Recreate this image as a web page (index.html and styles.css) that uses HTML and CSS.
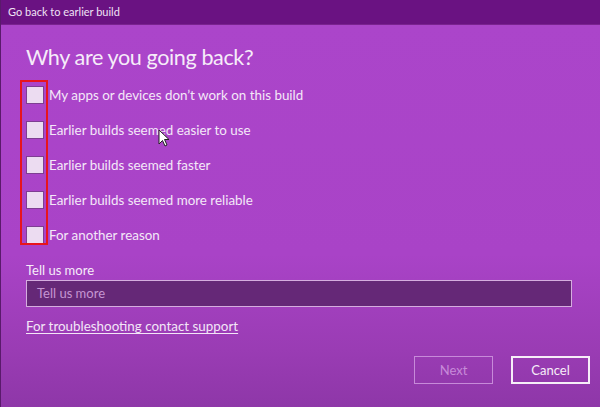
FILE: index.html
```html
<!DOCTYPE html>
<html lang="en">
<head>
<meta charset="utf-8">
<title>Go back to earlier build</title>
<link rel="stylesheet" href="styles.css">
</head>
<body>
<div class="window">
  <div class="titlebar">Go back to earlier build</div>
  <div class="content">
    <h1 class="heading">Why are you going back?</h1>
    <div class="options">
      <div class="highlight"></div>
      <label class="option"><span class="box"></span><span class="label">My apps or devices don’t work on this build</span></label>
      <label class="option"><span class="box"></span><span class="label">Earlier builds seemed easier to use</span></label>
      <label class="option"><span class="box"></span><span class="label">Earlier builds seemed faster</span></label>
      <label class="option"><span class="box"></span><span class="label">Earlier builds seemed more reliable</span></label>
      <label class="option"><span class="box"></span><span class="label">For another reason</span></label>
      <svg class="cursor" width="12" height="18" viewBox="0 0 12 18"><path d="M1 1 L1 15 L4.5 11.5 L7 17 L9 16 L6.5 10.5 L11 10.5 Z" fill="#fff" stroke="#222" stroke-width="1"/></svg>
    </div>
    <div class="field-label">Tell us more</div>
    <div class="input">Tell us more</div>
    <a class="link" href="#">For troubleshooting contact support</a>
    <div class="buttons">
      <div class="btn btn-disabled">Next</div>
      <div class="btn btn-primary">Cancel</div>
    </div>
  </div>
</div>
</body>
</html>
```
FILE: styles.css
```css
html, body {
  margin: 0;
  padding: 0;
}
body {
  width: 600px;
  height: 407px;
  overflow: hidden;
  font-family: "Lato", "Noto Sans", sans-serif;
  background: #9a3cb5;
}
.window {
  width: 600px;
  height: 407px;
  display: flex;
  flex-direction: column;
  border-left: 1px solid #5a1a6c;
  box-sizing: border-box;
}
.titlebar {
  height: 25px;
  flex: none;
  background: #6a1282;
  color: #f0e2f5;
  font-size: 11px;
  line-height: 24px;
  padding-left: 7px;
  border-bottom: 1px solid #7a2290;
  box-sizing: border-box;
}
.content {
  flex: 1;
  padding: 17px 10px 0 25px;
  background: linear-gradient(to bottom, #ab45ca 0%, #a943c7 60%, #9a3cb4 85%, #8e37a8 100%);
  display: flex;
  flex-direction: column;
  color: #f3e6f7;
}
.heading {
  margin: 0;
  font-weight: 400;
  font-size: 21.6px;
  letter-spacing: -0.4px;
  line-height: 30px;
  color: #f6ecf9;
}
.options {
  position: relative;
  margin-top: 5px;
  display: flex;
  flex-direction: column;
}
.option {
  height: 35px;
  display: flex;
  align-items: center;
  gap: 5px;
}
.box {
  width: 16px;
  height: 16px;
  background: #ecdcf1;
  border: 1px solid #7e3e92;
  flex: none;
}
.label {
  font-size: 13.4px;
  color: #f4e8f8;
}
.highlight {
  position: absolute;
  left: -6px;
  top: 3px;
  width: 24px;
  height: 161px;
  border: 2px solid #e8141c;
}
.cursor {
  position: absolute;
  left: 132px;
  top: 52px;
}
.field-label {
  margin-top: 10px;
  font-size: 13px;
  line-height: 17px;
  color: #f6ecf9;
}
.input {
  margin-top: 1px;
  margin-right: 18px;
  height: 27px;
  box-sizing: border-box;
  background: #652877;
  border: 1px solid #d5addf;
  color: #c596d2;
  font-size: 13px;
  line-height: 25px;
  padding-left: 10px;
}
.link {
  align-self: flex-start;
  margin-top: 11px;
  font-size: 13.4px;
  line-height: 17px;
  color: #f3e6f7;
  text-decoration: underline;
  text-underline-offset: 2px;
}
.buttons {
  margin-top: 21px;
  display: flex;
  justify-content: flex-end;
  gap: 18px;
}
.btn {
  width: 79px;
  height: 28px;
  box-sizing: border-box;
  display: flex;
  align-items: center;
  justify-content: center;
  font-size: 13px;
}
.btn-disabled {
  border: 1px solid #c78ad9;
  color: #c78ad9;
}
.btn-primary {
  border: 2px solid #f6eef8;
  color: #f6eef8;
}
```
